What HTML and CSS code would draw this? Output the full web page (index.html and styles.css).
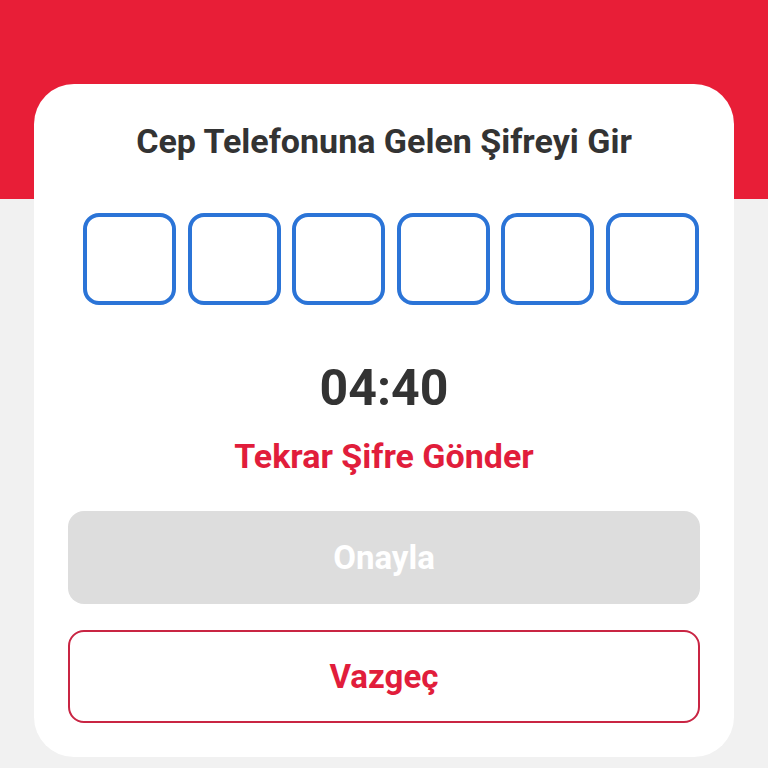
FILE: index.html
```html
<!doctype html>
<html lang="tr">
<head>
    <meta charset="UTF-8">
    <meta name="viewport" content="width=device-width, initial-scale=1.0">
    <title>Şifre Doğrulama</title>
    <link rel="stylesheet" href="styles.css">
</head>
<body>

    <div class="page">
        <div class="page-top"></div>
        <div class="otp">
            <h1 class="otp__title">Cep Telefonuna Gelen Şifreyi Gir</h1>
            <div class="otp-boxes">
                <input class="otp-boxes__item" type="text" maxlength="1">
                <input class="otp-boxes__item" type="text" maxlength="1">
                <input class="otp-boxes__item" type="text" maxlength="1">
                <input class="otp-boxes__item" type="text" maxlength="1">
                <input class="otp-boxes__item" type="text" maxlength="1">
                <input class="otp-boxes__item" type="text" maxlength="1">
            </div>
            <div class="otp__timer">04:40</div>
            <div class="otp__resend">Tekrar Şifre Gönder</div>
            <button class="otp-btn otp-btn--confirm" disabled>Onayla</button>
            <button class="otp-btn otp-btn--cancel">Vazgeç</button>
        </div>
    </div>

</body>
</html>
```

FILE: styles.css
```css
*,*:before,*:after{
    box-sizing: border-box;
    font-family: 'Roboto', 'Liberation Sans', sans-serif;
}
body{
    margin: 0;
    padding: 0;
    width: 768px;
    height: 768px;
    background: #f1f1f1;
    overflow: hidden;
}
.page{
    position: relative;
    height: 100%;
}
.page-top{
    height: 199px;
    background: #e81e37;
}
.otp{
    position: absolute;
    top: 84px;
    left: 34px;
    width: 700px;
    height: 673px;
    background: #fff;
    border-radius: 40px;
    padding: 0 34px;
    display: flex;
    flex-direction: column;
}
.otp__title{
    margin: 25px 0 0;
    font-size: 34px;
    line-height: 64px;
    font-weight: 700;
    text-align: center;
    color: #333;
}
.otp-boxes{
    display: flex;
    justify-content: space-between;
    margin-top: 40px;
    padding: 0 1px 0 15px;
}
.otp-boxes__item{
    width: 93px;
    height: 92px;
    border: 4px solid #2b74d7;
    border-radius: 16px;
    outline: none;
    background: #fff;
}
.otp__timer{
    margin-top: 51px;
    font-size: 50px;
    line-height: 64px;
    font-weight: 700;
    text-align: center;
    color: #333;
}
.otp__resend{
    margin-top: 16px;
    font-size: 34px;
    line-height: 40px;
    font-weight: 700;
    text-align: center;
    color: #e11d3b;
    cursor: pointer;
}
.otp-btn{
    display: block;
    width: 100%;
    height: 93px;
    border-radius: 16px;
    font-size: 33px;
    font-weight: 700;
    cursor: pointer;
}
.otp-btn--confirm{
    margin-top: 35px;
    border: none;
    background: #dddddd;
    color: #fff;
}
.otp-btn--cancel{
    margin-top: 26px;
    border: 2px solid #c92543;
    background: #fff;
    color: #e11d3b;
}
```
